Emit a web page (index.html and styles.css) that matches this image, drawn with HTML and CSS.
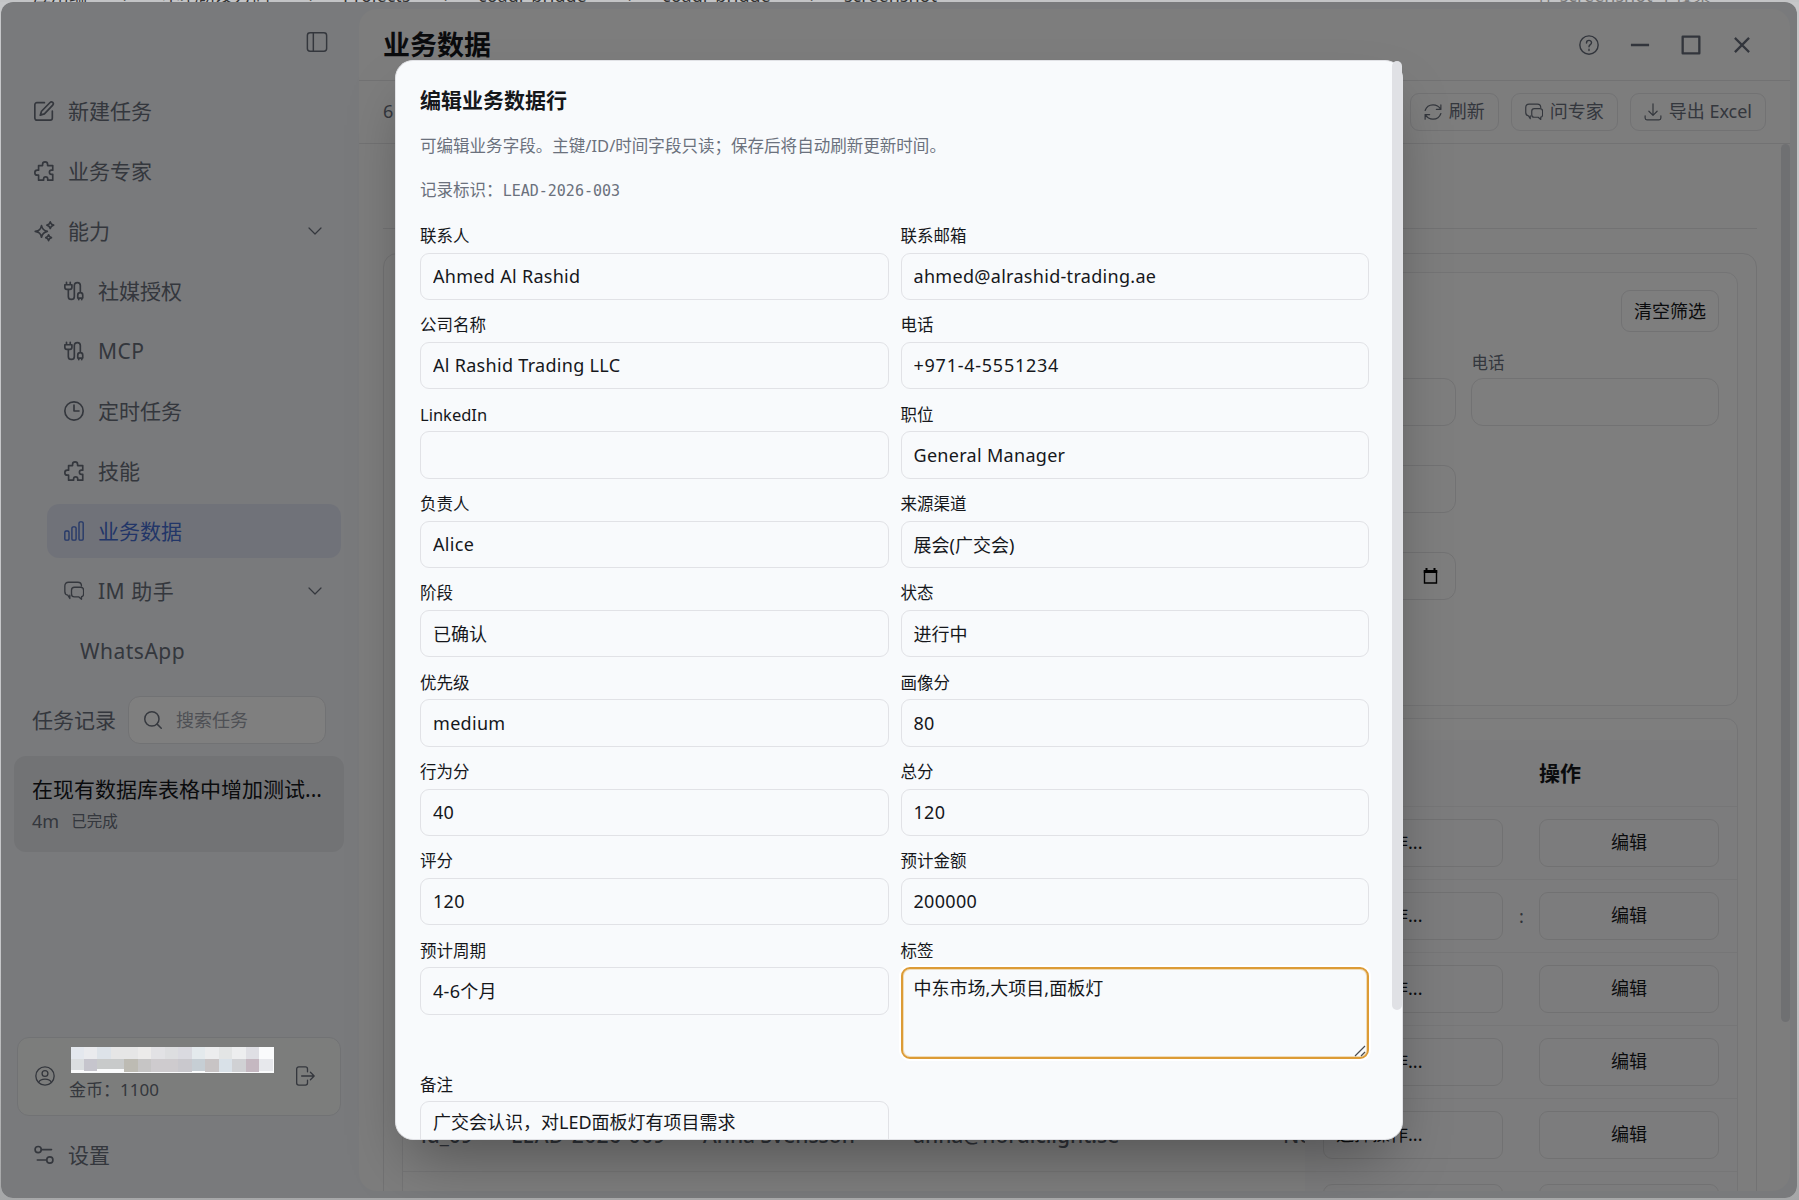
FILE: index.html
```html
<!DOCTYPE html>
<html lang="zh-CN">

<head>
    <meta charset="UTF-8">
    <meta name="viewport" content="width=device-width, initial-scale=1.0">
    <title>业务数据</title>
    <link rel="stylesheet" href="styles.css">
</head>

<body>

    <!-- Icons -->
    <svg class="icon-defs" aria-hidden="true">
        <symbol id="i-puzzle" viewBox="0 0 24 24">
            <path d="M5.500 5.500h4.800V4a3 3 0 0 1 6 0v1.500h6.200V11H21a2.500 2.500 0 0 0 0 5h1.500v7h-6v-1.500a2.500 2.500 0 0 0-5 0V23h-6v-6H4a3 3 0 0 1 0-6h1.500z" />
        </symbol>
        <symbol id="i-cable" viewBox="0 0 24 24">
            <path d="M3 1.500v3M7.500 1.500v3M1 4.500h8.500v3a2.500 2.500 0 0 1-2.500 2.500H3.500A2.500 2.500 0 0 1 1 7.500zM5.200 10v8.500a3.600 3.600 0 0 0 7.200 0V5.500a3.600 3.600 0 0 1 7.200 0V14M16.500 20.500V17a3 3 0 0 1 6 0v3.500zM17.700 20.500v2M21.300 20.500v2" />
        </symbol>
        <symbol id="i-chat" viewBox="0 0 24 24">
            <path d="M7 17v4l-2.500-4C2 16.500 1 15 1 12.500V6C1 3 2.500 1.500 5.500 1.500h11C19.500 1.500 21 3 21 6" />
            <path d="M12.500 7.500h7.500c2.500 0 3.500 1 3.500 3.500v4.500c0 2.200-1 3.200-2.500 3.400V22l-3.500-3h-5C10 19 9 18 9 15.500V11c0-2.500 1-3.500 3.500-3.500z" />
        </symbol>
        <symbol id="i-down" viewBox="0 0 24 24">
            <path d="M4 8l8 8 8-8" />
        </symbol>
    </svg>

    <!-- Strip of the window behind -->
    <div class="behind">
        <span class="crumb c1">应用端</span><span class="crumb c2">›</span>
        <span class="crumb c3">本地研发方向</span><span class="crumb c4">›</span>
        <span class="crumb c5">Projects</span><span class="crumb c6">›</span>
        <span class="crumb c7">coagi_bridge</span><span class="crumb c8">›</span>
        <span class="crumb c9">coagi_bridge</span><span class="crumb c10">›</span>
        <span class="crumb c11">screenshot</span><span class="crumb c12">在 screenshot 中搜索</span>
    </div>

    <div class="window">

        <!-- Sidebar -->
        <aside class="sidebar">
            <div class="sidebar-top">
                <svg class="icon toggle" viewBox="0 0 24 24"><rect x="1.500" y="2" width="21" height="20" rx="3" /><path d="M8 2v20" /></svg>
            </div>
            <nav class="nav">
                <a class="nav-item"><svg class="icon bold" viewBox="0 0 24 24"><path d="M12.500 2H3.500A2.500 2.500 0 0 0 1 4.500v16A2.500 2.500 0 0 0 3.500 23h16a2.500 2.500 0 0 0 2.500-2.500V12M19.300 1.800a2.200 2.200 0 0 1 3.200 3.100L12.500 15.500 7.500 17 9 12.300z" /></svg>新建任务</a>
                <a class="nav-item"><svg class="icon bold"><use href="#i-puzzle" /></svg>业务专家</a>
                <a class="nav-item"><svg class="icon bold" viewBox="0 0 24 24"><path d="M9 5.500c1 4.500 2.500 6 7 7-4.500 1-6 2.500-7 7-1-4.500-2.500-6-7.500-7 5-1 6.500-2.500 7.500-7zM19.500 1c.6 2.500 1.400 3.300 4 4-2.600.7-3.400 1.500-4 4-.6-2.500-1.400-3.300-4-4 2.600-.7 3.400-1.500 4-4zM17.500 16.500c.5 2.200 1.200 2.900 3.400 3.500-2.200.6-2.900 1.300-3.400 3.500-.5-2.200-1.200-2.900-3.400-3.500 2.200-.6 2.900-1.300 3.400-3.500z" /></svg>能力<svg class="icon chevron"><use href="#i-down" /></svg></a>
                <a class="nav-item sub"><svg class="icon bold"><use href="#i-cable" /></svg>社媒授权</a>
                <a class="nav-item sub latin"><svg class="icon bold"><use href="#i-cable" /></svg>MCP</a>
                <a class="nav-item sub"><svg class="icon bold" viewBox="0 0 24 24"><circle cx="12" cy="12" r="11" /><path d="M12 5v7h6" /></svg>定时任务</a>
                <a class="nav-item sub"><svg class="icon bold"><use href="#i-puzzle" /></svg>技能</a>
                <a class="nav-item sub active"><svg class="icon" viewBox="0 0 24 24"><rect x="1" y="12" width="5" height="11" rx="1.500" /><rect x="9.500" y="7" width="5" height="16" rx="1.500" /><rect x="18" y="1" width="5" height="22" rx="1.500" /></svg>业务数据</a>
                <a class="nav-item sub latin"><svg class="icon"><use href="#i-chat" /></svg>IM 助手<svg class="icon chevron"><use href="#i-down" /></svg></a>
                <a class="nav-item leaf latin">WhatsApp</a>
            </nav>

            <div class="history">
                <span>任务记录</span>
                <div class="search">
                    <svg class="icon" viewBox="0 0 24 24"><circle cx="10.500" cy="10.500" r="9.500" /><path d="M17.500 17.500l5.500 5.500" /></svg>
                    <span>搜索任务</span>
                </div>
            </div>
            <div class="task">
                <div class="task-title">在现有数据库表格中增加测试...</div>
                <div class="task-meta"><span>4m</span><small>已完成</small></div>
            </div>

            <div class="user">
                <svg class="icon" viewBox="0 0 24 24"><circle cx="12" cy="12" r="11" /><circle cx="12" cy="9" r="3.500" /><path d="M4.500 19.500c2-5 13-5 15 0" /></svg>
                <div class="coins">金币：1100</div>
                <svg class="icon logout" viewBox="0 0 24 24"><path d="M15 7V3.500A2.500 2.500 0 0 0 12.500 1h-8A2.500 2.500 0 0 0 2 3.500v17A2.500 2.500 0 0 0 4.500 23h8a2.500 2.500 0 0 0 2.500-2.500V17M8 12h14.500M18.500 7.500L23 12l-4.500 4.500" /></svg>
            </div>
            <a class="nav-item settings"><svg class="icon bold" viewBox="0 0 24 24"><circle cx="5" cy="5.500" r="3.700" /><path d="M9 5.500h12M4 18h11" /><circle cx="19" cy="18" r="3.700" /></svg>设置</a>
        </aside>

        <!-- Main panel -->
        <main class="main">
            <header class="header">
                <h1>业务数据</h1>
                <div class="controls">
                    <svg class="icon thin" viewBox="0 0 24 24"><circle cx="12" cy="12" r="11" /><path d="M9 9.500c0-4 6-4 6-.3 0 2.300-3 2.300-3 4.800M12 17v1.500" /></svg>
                    <svg class="icon heavy" viewBox="0 0 24 24"><path d="M2.500 12h19" /></svg>
                    <svg class="icon heavy" viewBox="0 0 24 24"><rect x="2" y="2" width="20" height="20" /></svg>
                    <svg class="icon heavy" viewBox="0 0 24 24"><path d="M4.500 4.500l15 15M19.500 4.500l-15 15" /></svg>
                </div>
            </header>
            <div class="toolbar">
                <span class="count">6</span>
                <button class="tool"><svg class="icon" viewBox="0 0 24 24"><path d="M1.500 10C3 5.500 7 2.500 12 2.500c4 0 8 2 10.500 6M22.500 2.500v6h-6M22.500 14c-1.500 4.500-5.500 7.500-10.500 7.500-4 0-8-2-10.500-6M1.500 21.500v-6h6" /></svg><span>刷新</span></button>
                <button class="tool"><svg class="icon"><use href="#i-chat" /></svg><span>问专家</span></button>
                <button class="tool"><svg class="icon" viewBox="0 0 24 24"><path d="M12 1v15M6.500 11l5.500 5.500 5.500-5.500M1.500 17v3a2.500 2.500 0 0 0 2.500 2.500h16a2.500 2.500 0 0 0 2.500-2.500v-3" /></svg><span>导出 Excel</span></button>
            </div>
            <div class="content">
                <div class="tabs"></div>
                <div class="board">
                    <section class="filters">
                        <div class="filters-head"><button class="clear">清空筛选</button></div>
                        <div class="filter-grid">
                            <div class="filter"></div>
                            <div class="filter"></div>
                            <div class="filter"></div>
                            <div class="filter"><span class="filter-label"></span><span class="box"></span></div>
                            <div class="filter"><span class="filter-label">电话</span><span class="box"></span></div>
                            <div class="filter at-four"><span class="filter-label"></span><span class="box"></span></div>
                            <div class="filter at-four"><span class="filter-label"></span><span class="box"><svg class="calendar" viewBox="0 0 14 16"><path d="M1 3h12v12H1z" fill="none" stroke="#000" stroke-width="1.400" /><path d="M.3 2h13.400v3H.3zM2 0h2v3H2zM10 0h2v3h-2z" /></svg></span></div>
                        </div>
                    </section>
                    <section class="table">
                        <div class="tr th"><div class="data"></div><div class="td op"></div><div class="td op">操作</div></div>
                        <div class="tr"><div class="data"></div><div class="td op"><span class="pick">选择操作...</span></div><div class="td op"><span class="edit">编辑</span></div></div>
                        <div class="tr"><div class="data"></div><div class="td op"><span class="pick">选择操作...</span></div><div class="td op"><span class="peek">:</span><span class="edit">编辑</span></div></div>
                        <div class="tr"><div class="data"></div><div class="td op"><span class="pick">选择操作...</span></div><div class="td op"><span class="edit">编辑</span></div></div>
                        <div class="tr"><div class="data"></div><div class="td op"><span class="pick">选择操作...</span></div><div class="td op"><span class="edit">编辑</span></div></div>
                        <div class="tr">
                            <div class="data">
                                <span class="td w-id">id_09</span><span class="td w-code">LEAD-2026-009</span><span class="td w-name">Anna Svensson</span><span class="td w-mail">anna@nordiclight.se</span><span class="td">Nordic</span>
                            </div>
                            <div class="td op"><span class="pick">选择操作...</span></div>
                            <div class="td op"><span class="edit">编辑</span></div>
                        </div>
                        <div class="tr"><div class="data"></div><div class="td op"><span class="pick"></span></div><div class="td op"><span class="edit"></span></div></div>
                    </section>
                </div>
                <div class="scrollbar"></div>
            </div>
        </main>

        <!-- Edit dialog -->
        <div class="overlay">
            <div class="modal">
                <form class="modal-body">
                    <h2>编辑业务数据行</h2>
                    <p class="desc">可编辑业务字段。主键/ID/时间字段只读；保存后将自动刷新更新时间。</p>
                    <p class="record">记录标识：<code>LEAD-2026-003</code></p>
                    <div class="form-grid">
                        <label class="field">联系人<input type="text" class="latin" value="Ahmed Al Rashid"></label>
                        <label class="field">联系邮箱<input type="text" class="latin" value="ahmed@alrashid-trading.ae"></label>
                        <label class="field">公司名称<input type="text" class="latin" value="Al Rashid Trading LLC"></label>
                        <label class="field">电话<input type="text" class="phone" value="+971-4-5551234"></label>
                        <label class="field">LinkedIn<input type="text" value=""></label>
                        <label class="field">职位<input type="text" class="latin" value="General Manager"></label>
                        <label class="field">负责人<input type="text" class="latin" value="Alice"></label>
                        <label class="field">来源渠道<input type="text" value="展会(广交会)"></label>
                        <label class="field">阶段<input type="text" value="已确认"></label>
                        <label class="field">状态<input type="text" value="进行中"></label>
                        <label class="field">优先级<input type="text" class="latin" value="medium"></label>
                        <label class="field">画像分<input type="text" class="latin" value="80"></label>
                        <label class="field">行为分<input type="text" class="latin" value="40"></label>
                        <label class="field">总分<input type="text" class="latin" value="120"></label>
                        <label class="field">评分<input type="text" class="latin" value="120"></label>
                        <label class="field">预计金额<input type="text" class="latin" value="200000"></label>
                        <label class="field">预计周期<input type="text" class="latin" value="4-6个月"></label>
                        <label class="field">标签<textarea class="focused">中东市场,大项目,面板灯</textarea><svg class="grip" viewBox="0 0 12 12"><path d="M1 11L11 1M7 11l4-4" /></svg></label>
                        <label class="field">备注<textarea>广交会认识，对LED面板灯有项目需求</textarea></label>
                    </div>
                </form>
                <div class="modal-scrollbar"></div>
            </div>
        </div>

        <!-- Blurred account name -->
        <svg class="mosaic" viewBox="0 0 203 26" preserveAspectRatio="none">
            <rect width="203" height="26" fill="#fafbfc" />
            <g>
                <rect width="13" height="12" fill="#e4e8ee" /><rect x="13" width="13" height="12" fill="#eaebee" />
                <rect x="26" width="14" height="12" fill="#dde3e9" /><rect x="40" width="27" height="12" fill="#e6e6e6" />
                <rect x="67" width="13" height="12" fill="#ecebea" /><rect x="80" width="14" height="12" fill="#e2e2e5" />
                <rect x="94" width="13" height="12" fill="#dddee0" /><rect x="107" width="14" height="12" fill="#dadae0" />
                <rect x="121" width="13" height="12" fill="#e4eaed" /><rect x="134" width="14" height="12" fill="#ecedee" />
                <rect x="148" width="13" height="12" fill="#e3e5e5" /><rect x="161" width="14" height="12" fill="#edeeef" />
                <rect x="175" width="13" height="12" fill="#dfdfe4" />
                <rect y="12" width="13" height="11" fill="#dbdee0" /><rect x="13" y="12" width="13" height="12" fill="#c6c5cd" />
                <rect x="26" y="12" width="27" height="10" fill="#c8caca" /><rect x="53" y="12" width="14" height="13" fill="#bdbbb3" />
                <rect x="67" y="12" width="13" height="13" fill="#c6c5c5" /><rect x="80" y="12" width="27" height="13" fill="#cecbce" />
                <rect x="107" y="12" width="14" height="13" fill="#c9c8cd" /><rect x="121" y="12" width="13" height="12" fill="#c6ced4" />
                <rect x="134" y="12" width="14" height="13" fill="#c8c4c5" /><rect x="148" y="12" width="13" height="13" fill="#d9e1e8" />
                <rect x="161" y="12" width="14" height="13" fill="#d0d1d4" /><rect x="175" y="12" width="13" height="13" fill="#c5b8c1" />
                <rect x="188" y="12" width="14" height="12" fill="#e7e8ec" />
            </g>
        </svg>
    </div>

</body>

</html>
```

FILE: styles.css
```css
* {
    box-sizing: border-box;
}

body,
html {
    margin: 0;
    padding: 0;
    height: 100%;
    overflow: hidden;
}

body {
    background: linear-gradient(#c6c7c9, #c6c7c9 80%, #a6a7a8);
    font-family: "Noto Sans", "Noto Sans CJK SC", sans-serif;
    font-size: 18px;
    line-height: 24px;
    color: #15171b;
}

input,
textarea,
button {
    font: inherit;
    color: inherit;
}

.icon-defs {
    position: absolute;
    width: 0;
    height: 0;
}

.icon {
    width: 20px;
    height: 20px;
    flex: none;
    fill: none;
    stroke: currentColor;
    stroke-width: 1.6;
    stroke-linecap: round;
    stroke-linejoin: round;
    overflow: visible;
}

.icon.bold {
    stroke-width: 2;
}

/* Strip of the window behind */
.behind {
    position: relative;
    height: 2px;
    overflow: hidden;
    background: #c3c4c6;
    color: #333;
}

.crumb {
    position: absolute;
    top: -15px;
    line-height: 20px;
    white-space: nowrap;
}

.c1 { left: 33px; }
.c2 { left: 123px; }
.c3 { left: 162px; }
.c4 { left: 309px; }
.c5 { left: 343px; }
.c6 { left: 444px; }
.c7 { left: 478px; }
.c8 { left: 628px; }
.c9 { left: 662px; }
.c10 { left: 810px; }
.c11 { left: 844px; }
.c12 { left: 1537px; color: #777; }

.window {
    position: relative;
    display: flex;
    height: 1196px;
    margin: 0 2px 0 1px;
    border-radius: 12px;
    overflow: hidden;
    background: #f2f4f8;
}

/* Sidebar */
.sidebar {
    width: 358px;
    flex: none;
    display: flex;
    flex-direction: column;
    padding-bottom: 16px;
    font-size: 21px;
    color: #686e7a;
}

.sidebar-top {
    display: flex;
    justify-content: flex-end;
    height: 82px;
    padding: 29px 31px 0 0;
}

.toggle {
    width: 22px;
    height: 22px;
}

.nav {
    display: flex;
    flex-direction: column;
    gap: 6px;
    padding: 0 18px 0 16px;
}

.nav-item {
    display: flex;
    align-items: center;
    gap: 14px;
    height: 54px;
    padding: 0 17px;
    border-radius: 12px;
}

.nav-item.sub {
    margin-left: 30px;
}

.nav-item.leaf {
    margin-left: 46px;
}

.nav-item.latin {
    letter-spacing: 0.5px;
}

.nav-item.active {
    background: #e1e5f3;
    color: #456cd0;
}

.chevron {
    width: 18px;
    height: 18px;
    margin-left: auto;
}

.history {
    display: flex;
    align-items: center;
    gap: 12px;
    margin-top: 18px;
    padding-left: 31px;
}

.search {
    display: flex;
    align-items: center;
    gap: 14px;
    width: 198px;
    height: 48px;
    padding-left: 15px;
    border: 1px solid #e3e4e8;
    border-radius: 12px;
    background: #fff;
    font-size: 18px;
    color: #9da1aa;
}

.search .icon {
    width: 18px;
    height: 18px;
    stroke-width: 2;
    color: #6c727e;
}

.task {
    height: 96px;
    margin: 12px 15px 0 13px;
    padding: 17px 18px;
    border-radius: 12px;
    background: #e4e6ea;
}

.task-title {
    line-height: 33px;
    color: #15171b;
    white-space: nowrap;
}

.task-meta {
    display: flex;
    align-items: center;
    gap: 12px;
    line-height: 30px;
    font-size: 18px;
}

.task-meta small {
    font-size: 15.500px;
}

.user {
    display: flex;
    align-items: center;
    gap: 14px;
    height: 79px;
    margin: auto 18px 12px 16px;
    padding: 0 25px 2px 17px;
    border: 1px solid #e2e4e8;
    border-radius: 12px;
    background: #f9fbf9;
}

.coins {
    padding-top: 28px;
    font-size: 17px;
}

.logout {
    margin-left: auto;
}

.settings {
    margin-left: 16px;
}

/* Main panel */
.main {
    flex: 1;
    display: flex;
    flex-direction: column;
    margin: 7px 7px 7px 0;
    border-radius: 18px;
    overflow: hidden;
    background: #fafafa;
}

.header {
    display: flex;
    align-items: center;
    justify-content: space-between;
    height: 72px;
    padding: 0 38px 0 24px;
    border-bottom: 1px solid #e4e4e6;
}

.header h1 {
    margin: 0;
    font-size: 27px;
    line-height: 36px;
}

.controls {
    display: flex;
    gap: 31px;
    color: #656b78;
}

.icon.heavy {
    stroke-width: 2.800;
    stroke-linecap: square;
}

.icon.thin {
    stroke-width: 1.700;
}

.toolbar {
    display: flex;
    align-items: center;
    gap: 12px;
    height: 63px;
    padding: 0 24px;
    border-bottom: 1px solid #e4e4e6;
    color: #686e7a;
}

.count {
    margin-right: auto;
    padding-bottom: 2px;
}

.tool {
    display: flex;
    align-items: center;
    gap: 7px;
    height: 38px;
    padding: 0 13px;
    border: 1px solid #e4e4e7;
    border-radius: 9px;
    background: transparent;
    white-space: nowrap;
}

.tool span {
    padding-bottom: 2px;
}

.tool .icon {
    width: 18px;
    height: 18px;
}

.content {
    position: relative;
    flex: 1;
    min-height: 0;
    padding: 0 33px 0 24px;
    overflow: hidden;
}

.tabs {
    height: 85px;
    border-bottom: 1px solid #e4e4e6;
}

.board {
    margin-top: 24px;
    padding: 18px;
    border: 1px solid #e4e4e6;
    border-radius: 14px;
}

.filters {
    height: 434px;
    padding: 17px 18px;
    border: 1px solid #e8e8ea;
    border-radius: 12px;
    background: #fdfdfd;
}

.filters-head {
    display: flex;
    justify-content: flex-end;
}

.clear {
    width: 98px;
    height: 42px;
    padding: 0;
    border: 1px solid #e4e4e6;
    border-radius: 9px;
    background: transparent;
}

.filter-grid {
    display: grid;
    grid-template-columns: repeat(5, 1fr);
    gap: 9px 15px;
    margin-top: 16px;
}

.at-four {
    grid-column: 4;
}

.filter-label {
    display: block;
    height: 30px;
    line-height: 30px;
    font-size: 16.500px;
    color: #686e7a;
}

.box {
    display: flex;
    align-items: center;
    justify-content: flex-end;
    height: 48px;
    padding-right: 17px;
    border: 1px solid #e4e4e6;
    border-radius: 12px;
}

.calendar {
    width: 15px;
    height: 16px;
}

/* Table */
.table {
    margin-top: 12px;
    padding-top: 21px;
    border: 1px solid #e8e8ea;
    border-radius: 12px;
    background: #fdfdfd;
}

.tr {
    display: flex;
    height: 73px;
    border-bottom: 1px solid #ececee;
    background: #fcfcfc;
}

.tr.th {
    height: 67px;
    background: #f8f8f9;
    font-size: 21px;
    font-weight: 700;
}

.data {
    flex: 1;
    min-width: 0;
    display: flex;
    overflow: hidden;
    font-size: 21px;
    font-weight: 500;
    color: #5d6470;
}

.td {
    display: flex;
    align-items: center;
    flex: none;
    padding: 0 18px;
    white-space: nowrap;
}

.w-id { width: 90px; }
.w-code { width: 192px; letter-spacing: 0.4px; }
.w-name { width: 210px; }
.w-mail { width: 370px; }

.op {
    position: relative;
    width: 216px;
    background: #f9f9fa;
}

/* Edge of the text that slides under the fixed column */
.peek {
    position: absolute;
    left: -2px;
    color: #5d6470;
}

.pick,
.edit {
    display: flex;
    align-items: center;
    width: 100%;
    height: 48px;
    padding: 0 12px 2px;
    border: 1px solid #e3e3e5;
    border-radius: 9px;
}

.edit {
    justify-content: center;
}

.scrollbar {
    position: absolute;
    top: 0;
    right: 0;
    width: 9px;
    height: 878px;
    border-radius: 5px;
    background: #dfe1e5;
}

/* Edit dialog */
.overlay {
    position: absolute;
    inset: 0;
    display: flex;
    align-items: center;
    justify-content: center;
    background: rgba(0, 0, 0, 0.5);
}

.modal {
    position: relative;
    width: 1008px;
    height: 1080px;
    border: 1px solid #e1e2e6;
    border-radius: 18px;
    background: #f8fafc;
    box-shadow: 0 30px 60px -15px rgba(0, 0, 0, 0.35);
}

.modal-body {
    height: 100%;
    padding: 22px 33px 0 24px;
    border-radius: 17px;
    overflow: hidden;
}

.modal h2 {
    margin: 0;
    font-size: 21px;
    line-height: 34px;
}

.desc,
.record {
    margin: 0;
    font-size: 16.550px;
    color: #6b717d;
}

.desc {
    margin-top: 17px;
}

.record {
    margin-top: 20px;
}

.record code {
    font-family: "DejaVu Sans Mono", monospace;
    font-size: 15px;
}

.form-grid {
    display: grid;
    grid-template-columns: 1fr 1fr;
    gap: 13.300px 12px;
    margin-top: 21px;
}

.field {
    position: relative;
    display: flex;
    flex-direction: column;
    gap: 4.700px;
    font-size: 16.500px;
    line-height: 24px;
}

.field input,
.field textarea {
    width: 100%;
    height: 47.350px;
    padding: 0 12px 1px;
    border: 1px solid #e1e2e6;
    border-radius: 9px;
    background: #f8fafc;
    font-size: 18px;
    outline: none;
}

.field .latin {
    letter-spacing: 0.300px;
}

.field .phone {
    letter-spacing: 0.750px;
}

.field textarea {
    height: 92px;
    padding: 8px 12px;
    resize: none;
}

.field textarea.focused {
    border: 2px solid #dc9b36;
    padding: 7px 11px;
    box-shadow: inset 0 0 0 1px #f0dcb8, 0 0 0 2px #fff;
}

.grip {
    position: absolute;
    right: 3px;
    bottom: 2px;
    width: 12px;
    height: 12px;
    fill: none;
    stroke: #4a4c50;
    stroke-width: 1.200;
}

.modal-scrollbar {
    position: absolute;
    top: 0;
    right: 0;
    width: 10px;
    height: 949px;
    border-radius: 5px;
    background: #e0e1e5;
}

/* Blurred account name */
.mosaic {
    position: absolute;
    left: 70px;
    top: 1045px;
    width: 203px;
    height: 26px;
}
```
